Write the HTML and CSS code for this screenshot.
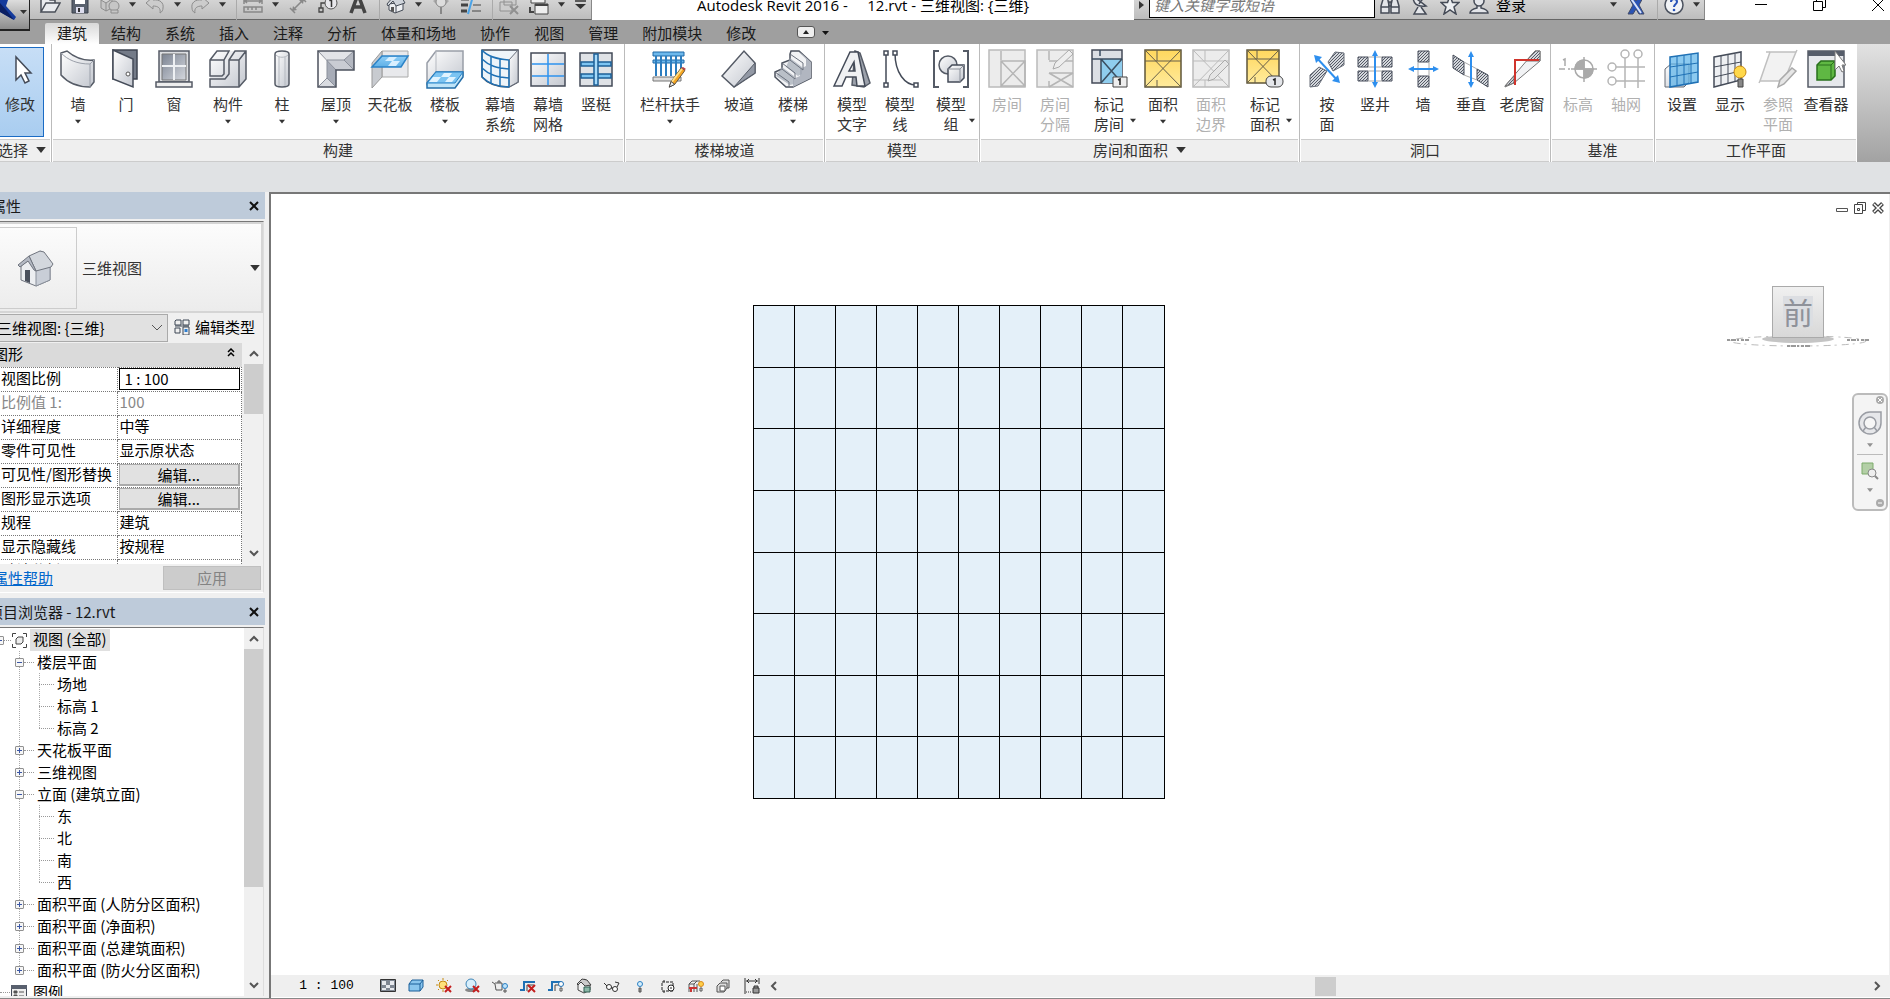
FILE: index.html
```html
<!DOCTYPE html>
<html lang="zh-CN">
<head>
    <meta charset="UTF-8">
    <meta name="viewport" content="width=device-width, initial-scale=1.0">
    <title>Autodesk Revit 2016 - 12.rvt</title>
    <link rel="stylesheet" href="styles.css">
</head>
<body>
    <!-- shared gradients and small symbols -->
    <svg class="defs" width="0" height="0" aria-hidden="true">
        <defs>
            <linearGradient id="gr" x1="0" y1="0" x2="1" y2="1"><stop offset="0" stop-color="#fff"/><stop offset="1" stop-color="#c3c7cf"/></linearGradient>
            <linearGradient id="gd" x1="0" y1="0" x2="1" y2="1"><stop offset="0" stop-color="#7b8392"/><stop offset="1" stop-color="#d5d8de"/></linearGradient>
            <linearGradient id="bl" x1="0" y1="0" x2="0" y2="1"><stop offset="0" stop-color="#8ccdf8"/><stop offset="1" stop-color="#5fb0e6"/></linearGradient>
            <linearGradient id="ye" x1="0" y1="0" x2="0" y2="1"><stop offset="0" stop-color="#ffd75e"/><stop offset="1" stop-color="#ffeb9c"/></linearGradient>
            <pattern id="hatch" width="3" height="3" patternUnits="userSpaceOnUse"><rect width="3" height="3" fill="#d4d7dc"/><path d="M0 3 3 0" stroke="#555b66"/></pattern>
            <symbol id="tri" viewBox="0 0 8 5"><path d="M0 0h8L4 5z" fill="#333"/></symbol>
            <symbol id="pencil" viewBox="0 0 20 24"><path d="M1 23 3 17 14 2l4 3L7 20z" fill="#f5a623" stroke="#5b4a35"/><path d="m4 17 11-14" stroke="#ffe08a" stroke-width="2"/><path d="m1 23 2-6 4 3z" fill="#eee" stroke="#444"/><path d="m14 2 2-1 3 2-1 2z" fill="#b44" /></symbol>
        </defs>
    </svg>

    <header class="titlebar">
        <div class="quick-access">
            <button class="qa" aria-label="打开"><svg width="22" height="18" viewBox="0 0 22 18"><path d="M2 16V2h7l2 2h5v3M2 16l5-9h14l-5 9z" fill="#e9ebee" stroke="#4a4f58" stroke-width="1.5"/></svg></button>
            <button class="qa" aria-label="保存"><svg width="18" height="18" viewBox="0 0 18 18"><path d="M1 1h16v16H1z" fill="#59616e" stroke="#3a404a"/><path d="M4 1h10v7H4z" fill="#fff"/><path d="M5 11h8v6H5z" fill="#dde"/><path d="M7 12h2v4H7z" fill="#333"/></svg></button>
            <button class="qa" aria-label="同步"><svg width="22" height="18" viewBox="0 0 22 18" fill="#c6c6c6" stroke="#8d8d8d"><path d="m2 4 5-3 6 2v9l-6 3-5-3zM7 7v8M2 4l5 3 6-4"/><circle cx="15" cy="10" r="5"/><path d="M12 14h7v3h-7z"/></svg></button>
            <button class="qa-arrow" aria-label="同步选项"><svg width="7" height="5"><use href="#tri"/></svg></button>
            <button class="qa" aria-label="撤销"><svg width="20" height="18" viewBox="0 0 20 18"><path d="M1 7 8 1v3c7-1 11 3 10 8 0 2-1 4-3 5 1-5-2-7-7-7v3z" fill="#ccc" stroke="#8d8d8d"/></svg></button>
            <button class="qa-arrow" aria-label="撤销列表"><svg width="7" height="5"><use href="#tri"/></svg></button>
            <button class="qa" aria-label="恢复"><svg width="20" height="18" viewBox="0 0 20 18"><path d="m19 7-7-6v3C5 3 1 7 2 12c0 2 1 4 3 5-1-5 2-7 7-7v3z" fill="#ccc" stroke="#8d8d8d"/></svg></button>
            <button class="qa-arrow" aria-label="恢复列表"><svg width="7" height="5"><use href="#tri"/></svg></button>
            <span class="qa-sep"></span>
            <button class="qa" aria-label="测量"><svg width="20" height="16" viewBox="0 0 20 16" fill="none" stroke="#888" stroke-width="1.5"><path d="M1 4h18M1 1v6M19 1v6M4 2 2 4l2 2M16 2l2 2-2 2M1 10h18v5H1zM5 10v3M9 10v3M13 10v3"/></svg></button>
            <button class="qa-arrow" aria-label="测量选项"><svg width="7" height="5"><use href="#tri"/></svg></button>
            <button class="qa" aria-label="对齐尺寸标注"><svg width="18" height="18" viewBox="0 0 18 18" stroke="#888" stroke-width="1.5"><path d="m3 15 12-12M1 12l5 5M12 1l5 5"/><path d="m3 15 1-5 4 4zM15 3l-5 1 4 4z" fill="#888" stroke="none"/></svg></button>
            <button class="qa" aria-label="按类别标记"><svg width="20" height="20" viewBox="0 0 20 20"><path d="M1 17h4v-4H1zM3 13V8h4" fill="none" stroke="#444" stroke-width="1.3"/><circle cx="13" cy="8" r="6" fill="#e8e8ec" stroke="#555"/><path d="m11.500 6 2-1.500V12" fill="none" stroke="#333" stroke-width="1.500"/></svg></button>
            <button class="qa" aria-label="文字"><svg width="20" height="18" viewBox="0 0 20 18"><path d="M3 17 9 1h2l6 16M5 11h10" fill="none" stroke="#444" stroke-width="3.500"/></svg></button>
            <span class="qa-sep"></span>
            <button class="qa" aria-label="默认三维视图"><svg width="20" height="18" viewBox="0 0 20 18"><path d="M3 8v6l6 3 8-3V6z" fill="#eef0f3" stroke="#444b56"/><path d="m1 8 6-7 8-1 4 7-9 3-3-5-5 5z" fill="#cfd4db" stroke="#444b56"/><path d="M10 10v7" stroke="#444b56"/><path d="M5 11h3v5l-3-1z" fill="#555"/></svg></button>
            <button class="qa-arrow" aria-label="三维视图选项"><svg width="7" height="5"><use href="#tri"/></svg></button>
            <button class="qa" aria-label="剖面"><svg width="18" height="20" viewBox="0 0 18 20"><path d="M1 6 9 0l8 6-5 5H6z" fill="#aaa"/><circle cx="9" cy="7" r="5" fill="#ddd" stroke="#888"/><path d="M9 12v7" stroke="#888" stroke-width="2"/></svg></button>
            <button class="qa" aria-label="细线"><svg width="20" height="20" viewBox="0 0 20 20"><path d="M0 4h8M0 10h7M0 16h6" stroke="#444" stroke-width="3"/><path d="M13 4h7M12 10h8M11 16h9" stroke="#444"/><path d="M12 1 7 19" stroke="#4aa3e8" stroke-width="2"/></svg></button>
            <span class="qa-sep"></span>
            <button class="qa" aria-label="关闭隐藏窗口"><svg width="20" height="20" viewBox="0 0 20 20" fill="#ccc" stroke="#909090"><path d="M5 2h12v8H5zM1 7h12v9H1z"/><path d="m11 11 8 8M19 11l-8 8" stroke-width="2"/></svg></button>
            <button class="qa" aria-label="切换窗口"><svg width="20" height="20" viewBox="0 0 20 20" fill="#eee" stroke="#444"><path d="M2 1h14v7H2zM6 9h13v10H6z"/><path d="M6 10h13M1 12v5h4" stroke-width="2" fill="none"/></svg></button>
            <button class="qa-arrow" aria-label="窗口列表"><svg width="7" height="5"><use href="#tri"/></svg></button>
            <button class="qa-arrow" aria-label="自定义快速访问工具栏"><svg width="11" height="10" viewBox="0 0 11 10"><path d="M0 1h11" stroke="#333" stroke-width="1.500"/><path d="M0 4h11L5.500 9z" fill="#333"/></svg></button>
        </div>
        <div class="window-title">Autodesk Revit 2016 -&nbsp;&nbsp;&nbsp;&nbsp; 12.rvt - 三维视图: {三维}</div>
        <div class="info-center">
            <button class="search-toggle" aria-label="展开搜索"><svg width="5" height="8"><path d="M0 0v8l5-4z" fill="#333"/></svg></button>
            <input class="search" type="text" placeholder="键入关键字或短语" aria-label="搜索">
            <button class="qa" aria-label="查找"><svg width="20" height="20" viewBox="0 0 20 20" fill="#e3e5e9" stroke="#454b57" stroke-width="1.500"><path d="M4 1h3l2 9v8H1v-7zM16 1h-3l-2 9v8h8v-7z"/><path d="M9 7h2v4H9zM1 12h8M11 12h8"/></svg></button>
            <button class="qa" aria-label="通讯中心"><svg width="20" height="20" viewBox="0 0 20 20" fill="#e3e5e9" stroke="#454b57" stroke-width="1.500"><path d="M3 1c0 8 4 11 13 10zM9 9l5-7M8 12l-4 7h12l-5-7"/><circle cx="14" cy="2" r="1.500"/></svg></button>
            <button class="qa" aria-label="收藏夹"><svg width="20" height="20" viewBox="0 0 20 20"><path d="m10 1 2.500 6.500H19L14 12l2 7-6-4-6 4 2-7-5-4.500h6.500z" fill="#eceef1" stroke="#454b57" stroke-width="1.500"/></svg></button>
            <button class="sign-in"><svg width="20" height="20" viewBox="0 0 20 20" fill="#e3e5e9" stroke="#454b57" stroke-width="1.500"><path d="M1 18c0-3 3-4 7-5V9h4v4c4 1 7 2 7 5z"/><circle cx="10" cy="6" r="5"/></svg><span>登录</span></button>
            <button class="qa-arrow" aria-label="登录选项"><svg width="7" height="5"><use href="#tri"/></svg></button>
            <button class="qa" aria-label="Exchange Apps"><svg width="20" height="20" viewBox="0 0 20 20"><path d="M2 1h5l3 5 3-5h5l-5 9 5 9h-5l-3-5-3 5H2l5-9z" fill="#2a53b5" stroke="#444c66"/><path d="m4 2 11 16" stroke="#d9e3fa" stroke-width="2"/></svg></button>
            <span class="qa-sep"></span>
            <button class="qa" aria-label="帮助"><svg width="20" height="20" viewBox="0 0 20 20"><circle cx="10" cy="10" r="9" fill="#f1f3f6" stroke="#4b525f" stroke-width="1.500"/><path d="M7 7c0-4 6-4 6 0 0 2-3 2-3 5" fill="none" stroke="#2752b8" stroke-width="2"/><circle cx="10" cy="15" r="1.300" fill="#2752b8"/></svg></button>
            <button class="qa-arrow" aria-label="帮助选项"><svg width="7" height="5"><use href="#tri"/></svg></button>
        </div>
        <div class="window-buttons">
            <button aria-label="最小化"><svg width="12" height="12"><path d="M0 5.500h12" stroke="#000"/></svg></button>
            <button aria-label="还原"><svg width="14" height="14" fill="none" stroke="#000"><path d="M.5 3.500h9v9h-9zM3.500 3V.5h9v9H10"/></svg></button>
            <button aria-label="关闭"><svg width="12" height="12"><path d="m0 0 12 12M12 0 0 12" stroke="#000"/></svg></button>
        </div>
    </header>
    <button class="app-button" aria-label="应用程序菜单"><svg width="28" height="30" viewBox="0 0 28 30"><path d="M0 0h8l-2 6 10 11-2 3-10-6-4-2z" fill="#143a9c"/><path d="m0 3 7 8 7 9-9-5-5-3z" fill="#0b1f63"/><path d="M20 10h7l-3.500 4z" fill="#333"/></svg></button>

    <nav class="tabs">
        <button class="tab active">建筑</button>
        <button class="tab">结构</button>
        <button class="tab">系统</button>
        <button class="tab">插入</button>
        <button class="tab">注释</button>
        <button class="tab">分析</button>
        <button class="tab">体量和场地</button>
        <button class="tab">协作</button>
        <button class="tab">视图</button>
        <button class="tab">管理</button>
        <button class="tab">附加模块</button>
        <button class="tab">修改</button>
        <button class="tab-state" aria-label="最小化功能区"><svg width="34" height="12" viewBox="0 0 34 12"><rect x=".5" y=".5" width="17" height="11" rx="2.500" fill="#eee" stroke="#555"/><path d="m6 8 3-4 3 4z" fill="#222"/><path d="M25 5h7l-3.500 4z" fill="#111"/></svg></button>
    </nav>

    <main class="ribbon">
        <section class="panel select-panel">
            <div class="tools">
                <button class="tool modify"><svg width="40" height="40" viewBox="0 0 40 40"><path d="M16 8v23l5-5 4 8 4-2-4-8h6z" fill="#fff" stroke="#444b58" stroke-width="1.500"/></svg><span>修改</span></button>
            </div>
            <h2>选择 <svg width="10" height="6"><use href="#tri"/></svg></h2>
        </section>

        <section class="panel build-panel">
            <div class="tools">
                <button class="tool"><svg width="40" height="40" viewBox="0 0 40 40"><path d="M3 4 9 2c7 6 16 10 27 9v22l-4 5C20 38 10 34 3 26z" fill="url(#gr)" stroke="#555b66" stroke-width="1.500"/><path d="M3 4c7 7 16 11 29 11v23M32 15l4-4" fill="none" stroke="#9ba0aa"/></svg><span>墙</span><svg class="drop" width="6" height="5"><use href="#tri"/></svg></button>
                <button class="tool"><svg width="40" height="40" viewBox="0 0 40 40"><path d="M7 1h24v29H7z" fill="#747b88" stroke="#3e4450" stroke-width="1.500"/><path d="m7 1 20 9v28L7 30z" fill="url(#gr)" stroke="#444b58" stroke-width="1.500"/><circle cx="22" cy="25" r="2" fill="#fff" stroke="#555"/></svg><span>门</span></button>
                <button class="tool"><svg width="40" height="40" viewBox="0 0 40 40"><path d="M5 2h30v31H5z" fill="#dcdee2" stroke="#555b66" stroke-width="1.500"/><path d="M8 5h24v26H8z" fill="url(#gd)" stroke="#777"/><path d="M20 5v26M8 17h24" stroke="#eef0f3" stroke-width="2"/><path d="M2 33h36v5H2z" fill="#eee" stroke="#555b66" stroke-width="1.500"/></svg><span>窗</span></button>
                <button class="tool wide"><svg width="40" height="40" viewBox="0 0 40 40"><path d="m2 11 7-9h29v28l-7 8H2V28z" fill="url(#gr)"/><path d="M2 11 9 2h12l-5 9v14l-2 2H2zM2 11h14M16 11l5-9M2 30h15l4-5V11l6-9h11v28l-7 8H2zM21 11h10v27M31 11l7-9" fill="none" stroke="#555b66" stroke-width="1.500"/></svg><span>构件</span><svg class="drop" width="6" height="5"><use href="#tri"/></svg></button>
                <button class="tool"><svg width="40" height="40" viewBox="0 0 40 40"><path d="M13 5c0-4 14-4 14 0v30c0 4-14 4-14 0z" fill="url(#gr)" stroke="#555b66" stroke-width="1.500"/><path d="M14 6c3 3 9 3 12 0M17 8v29M23 8v29" fill="none" stroke="#b5b9c0"/></svg><span>柱</span><svg class="drop" width="6" height="5"><use href="#tri"/></svg></button>
                <button class="tool wide"><svg width="40" height="40" viewBox="0 0 40 40"><path d="M2 2h36L28 11H11z" fill="#e2e4e8"/><path d="m2 2 9 9v18l-9 9z" fill="#fafafa"/><path d="m38 2-10 9 10 10z" fill="#b4b8c1"/><path d="M11 11h17l10 10H20z" fill="#c9ccd3"/><path d="m11 11 9 10v17l-9-9z" fill="#a7acb7"/><path d="m2 38 9-9 9 9z" fill="#d9dbe0"/><path d="m2 2 18 19M11 11v18M11 11h17l10-9M28 11l10 10M11 29l-9 9M11 29l9 9" fill="none" stroke="#8b909b"/><path d="M2 2h36v19H20v17H2z" fill="none" stroke="#4c525e" stroke-width="1.500"/></svg><span>屋顶</span><svg class="drop" width="6" height="5"><use href="#tri"/></svg></button>
                <button class="tool"><svg width="40" height="40" viewBox="0 0 40 40"><path d="M12 2h26v26H12z" fill="#e8e9ec" stroke="#aaa"/><path d="M2 14 12 2v26L2 39z" fill="#c8cbd0" stroke="#999"/><path d="m2 18 10-11h26l-7 11z" fill="url(#bl)" stroke="#2b83c7" stroke-width="1.500"/><path d="m19 8-4 4h8l4-4zM34 8l-4 4h-8l-4 5h8l4-5z" fill="#d8efff"/></svg><span>天花板</span></button>
                <button class="tool floor"><svg width="40" height="40" viewBox="0 0 40 40"><path d="m2 14 9-12h27v24H11L2 35z" fill="url(#gr)" stroke="#999ea8" stroke-width="1.500"/><path d="M11 2v22" stroke="#b5b9c0"/><path d="m2 34 9-11h27v5l-8 11H2z" fill="#bfe4f8" stroke="#256fa9" stroke-width="1.500"/><path d="m2 34 9-11h27l-8 11z" fill="#7cc4f2" stroke="#2b83c7"/><path d="m19 24-3 4h8l3-4zM34 24l-3 4h-7l-4 5h7l4-5zM16 28H8l-4 5h8z" fill="#e0f3ff"/></svg><span>楼板</span><svg class="drop" width="6" height="5"><use href="#tri"/></svg></button>
                <button class="tool"><svg width="40" height="40" viewBox="0 0 40 40"><path d="M2 1h36v32l-9 5C17 38 7 34 2 28z" fill="#eef4f9" stroke="#444b58" stroke-width="1.500"/><path d="m38 1-9 10v27l9-5z" fill="url(#gr)" stroke="#6a707c"/><path d="M2 1c6 7 15 9 27 10M2 10c7 7 15 9 27 10M2 19c7 7 15 9 27 10M2 28c7 7 15 10 27 10M2 1v27M11 8v27M20 10v27M29 11v27" fill="none" stroke="#1f71b5" stroke-width="1.500"/></svg><span>幕墙<br>系统</span></button>
                <button class="tool"><svg width="40" height="40" viewBox="0 0 40 40"><path d="M3 4h34v33H3z" fill="url(#gr)" stroke="#444b58" stroke-width="1.500"/><path d="M20 5v31M4 15h32M4 27h32" stroke="#2e93ee" stroke-width="1.500"/></svg><span>幕墙<br>网格</span></button>
                <button class="tool"><svg width="40" height="40" viewBox="0 0 40 40"><path d="M4 4h32v33H4z" fill="#dfe2e6" stroke="#444b58" stroke-width="1.500"/><path d="M5 13h30v4H5zM5 25h30v4H5z" fill="#7cc4f2" stroke="#1c5f96" stroke-width="1.500"/><path d="M18 5h4v31h-4z" fill="#a7dbfa" stroke="#1c5f96" stroke-width="1.500"/></svg><span>竖梃</span></button>
            </div>
            <h2>构建</h2>
        </section>

        <section class="panel stair-panel">
            <div class="tools">
                <button class="tool rail"><svg width="40" height="40" viewBox="0 0 40 40"><path d="M3 3h31v4H3zM3 11h31v3H3z" fill="#6db8ec" stroke="#1f69a6"/><path d="M3 28h28v4H3z" fill="#ddd" stroke="#777"/><path d="M6 7v20M11 7v20M16 7v20M21 7v20M26 7v20M31 7v18" stroke="#2c7dbf" stroke-width="2"/><svg x="18" y="17" width="19" height="22"><use href="#pencil"/></svg></svg><span>栏杆扶手</span><svg class="drop" width="6" height="5"><use href="#tri"/></svg></button>
                <button class="tool mid"><svg width="40" height="40" viewBox="0 0 40 40"><path d="M3 27 25 2l-3 13-7 23z" fill="#f4f5f7"/><path d="M3 27 25 2l11 12v10L15 38z" fill="url(#gr)" stroke="#555b66" stroke-width="1.500"/><path d="M36 14v10L15 38z" fill="#9399a5" stroke="#555b66"/></svg><span>坡道</span></button>
                <button class="tool mid"><svg width="40" height="40" viewBox="0 0 40 40"><path d="M18 2h8l12 11v16L20 38h-7L2 28v-5l7-3v-6l8-3V5z" fill="#f2f3f5" stroke="#4c525e" stroke-width="1.500"/><path d="m26 2 12 11v16l-18 9v-8l7-3v-7l6-3v-7z" fill="#b1b6c0"/><path d="m17 9 12 9v7l-4 2-12-9zM9 18l12 9v8l-4 1-14-9z" fill="#a3a9b5" opacity=".7"/><path d="m17 5 13 9v7l-13-10M9 14l13 10v6L9 20M2 23l14 10v5" fill="none" stroke="#6c727e"/></svg><span>楼梯</span><svg class="drop" width="6" height="5"><use href="#tri"/></svg></button>
            </div>
            <h2>楼梯坡道</h2>
        </section>

        <section class="panel model-panel">
            <div class="tools">
                <button class="tool"><svg width="40" height="40" viewBox="0 0 40 40"><path d="m23 2 5 2 10 30-6 4-12-2z" fill="#9ca1ab" stroke="#555b66" stroke-width="1.500"/><path d="M2 37 18 3h8l7 34h-8l-1-9H14l-4 9zM17 22h6l-1-9z" fill="#f0f1f3" fill-rule="evenodd" stroke="#444b58" stroke-width="1.500"/></svg><span>模型<br>文字</span></button>
                <button class="tool"><svg width="40" height="40" viewBox="0 0 40 40" fill="#fff" stroke="#444b58" stroke-width="1.500"><path d="M6 4v32M15 4c0 20 10 32 21 32" fill="none"/><path d="M4 2h4v4H4zM4 34h4v4H4zM13 2h4v4h-4zM34 34h4v4h-4z"/></svg><span>模型<br>线</span></button>
                <button class="tool mid side-drop"><svg width="40" height="40" viewBox="0 0 40 40"><path d="M8 2H3v36h5M32 2h5v36h-5" fill="none" stroke="#555b66" stroke-width="2"/><circle cx="17" cy="16" r="9" fill="url(#gr)" stroke="#555b66" stroke-width="1.500"/><path d="m17 20 4-4h12v13l-4 4H17z" fill="url(#gr)" stroke="#444b58" stroke-width="1.500"/><path d="M17 20h12v13M29 20l4-4" fill="none" stroke="#8b909a"/></svg><span>模型<br>组</span><svg class="drop" width="6" height="5"><use href="#tri"/></svg></button>
            </div>
            <h2>模型</h2>
        </section>

        <section class="panel room-panel">
            <div class="tools">
                <button class="tool" disabled><svg width="40" height="40" viewBox="0 0 40 40"><path d="M2 1h36v37H2z" fill="#ececec" stroke="#bbb" stroke-width="1.500"/><path d="M14 2v9M14 32v6M14 12h24v25H14zM14 12l24 25M38 12 14 37" fill="none" stroke="#b5b5b5" stroke-width="1.500"/></svg><span>房间</span></button>
                <button class="tool" disabled><svg width="40" height="40" viewBox="0 0 40 40"><path d="M2 1h36v37H2z" fill="#ececec" stroke="#bbb" stroke-width="1.500"/><path d="M14 2v9M14 32v6M14 24h24M14 24l24 14M38 24 14 38M14 12h24" fill="none" stroke="#b5b5b5" stroke-width="1.500"/><path d="m18 20 2-6L34 1l4 4-14 13z" fill="#eee" stroke="#aaa"/></svg><span>房间<br>分隔</span></button>
                <button class="tool wide side-drop"><svg width="40" height="40" viewBox="0 0 40 40"><path d="M3 1h30v33H3z" fill="#dcdfe4" stroke="#444b58" stroke-width="1.500"/><path d="M12 10h21v24H12z" fill="#8fcdee"/><path d="M11 1v6M3 10h30M12 10v24M12 10l21 24M33 10 12 34" fill="none" stroke="#3b4e60" stroke-width="1.500"/><path d="M24 28h14v10H24z" fill="#eee" stroke="#444"/><path d="m29 31 2-1v6" fill="none" stroke="#222" stroke-width="1.500"/></svg><span>标记<br>房间</span><svg class="drop" width="6" height="5"><use href="#tri"/></svg></button>
                <button class="tool"><svg width="40" height="40" viewBox="0 0 40 40"><path d="M2 1h36v37H2z" fill="url(#ye)" stroke="#5f553a" stroke-width="1.500"/><path d="m2 1 36 37M38 1 2 38M2 12h36M14 1v11M14 31v7" fill="none" stroke="#675f4a"/></svg><span>面积</span><svg class="drop" width="6" height="5"><use href="#tri"/></svg></button>
                <button class="tool" disabled><svg width="40" height="40" viewBox="0 0 40 40"><path d="M2 1h36v37H2z" fill="#ececec" stroke="#bbb" stroke-width="1.500"/><path d="m2 1 36 37M38 1 2 38M2 12h36M14 1v11M14 31v7M2 31h30" fill="none" stroke="#bbb"/><path d="m17 32 2-6 15-15 4 4-15 15z" fill="#e6e6e6" stroke="#aaa"/></svg><span>面积<br>边界</span></button>
                <button class="tool wide side-drop"><svg width="40" height="40" viewBox="0 0 40 40"><path d="M2 1h32v33H2z" fill="url(#ye)" stroke="#5f553a" stroke-width="1.500"/><path d="m2 1 32 33M34 1 2 34M2 10h32M12 1v9M10 28v6" fill="none" stroke="#675f4a"/><rect x="21" y="27" width="17" height="11" rx="5" fill="#e4e6ea" stroke="#444"/><path d="m28 31 2-1v6" fill="none" stroke="#222" stroke-width="1.500"/></svg><span>标记<br>面积</span><svg class="drop" width="6" height="5"><use href="#tri"/></svg></button>
            </div>
            <h2>房间和面积 <svg width="10" height="6"><use href="#tri"/></svg></h2>
        </section>

        <section class="panel opening-panel">
            <div class="tools">
                <button class="tool"><svg width="40" height="40" viewBox="0 0 40 40"><path d="m21 13 7-10 9 1v12L26 22zM3 38V26l9-8 8 4-9 15z" fill="url(#hatch)" stroke="#666c77"/><path d="m9 8 22 24" stroke="#2e8fee" stroke-width="2"/><path d="m7 6 8 2-6 6zM33 34l-8-2 6-6z" fill="#2e8fee"/></svg><span>按<br>面</span></button>
                <button class="tool"><svg width="40" height="40" viewBox="0 0 40 40"><path d="M3 8h10v10H3zM27 8h10v10H27zM3 22h10v10H3zM27 22h10v10H27z" fill="url(#hatch)" stroke="#444b58"/><path d="M13 8h14M13 18h14M13 22h14M13 32h14" stroke="#aaa"/><path d="M20 4v33" stroke="#2e8fee" stroke-width="2"/><path d="m20 1 3 6h-6zM20 39l3-6h-6z" fill="#2e8fee"/></svg><span>竖井</span></button>
                <button class="tool"><svg width="40" height="40" viewBox="0 0 40 40"><path d="M15 2h11v11H15zM15 27h11v11H15z" fill="url(#hatch)" stroke="#444b58"/><path d="M15 13v14M26 13v14" stroke="#aaa"/><path d="M8 20h25" stroke="#2e8fee" stroke-width="2"/><path d="m5 20 6-3v6zM36 20l-6-3v6z" fill="#2e8fee"/></svg><span>墙</span></button>
                <button class="tool"><svg width="40" height="40" viewBox="0 0 40 40"><path d="m2 6 11 7v13L2 19zM26 20l11 6v12l-11-7z" fill="url(#hatch)" stroke="#444b58"/><path d="m13 13 13 7M13 26l13 5" stroke="#aaa"/><path d="M20 6v30" stroke="#2e8fee" stroke-width="2"/><path d="m20 2 3 6h-6zM20 39l3-6h-6z" fill="#2e8fee"/></svg><span>垂直</span></button>
                <button class="tool mid"><svg width="40" height="40" viewBox="0 0 40 40"><path d="M3 37 33 2h5v10L12 34l-9 4z" fill="#f2f3f5" stroke="#777"/><path d="M24 12 33 2h5v10zM3 37l9-10v7z" fill="url(#hatch)" stroke="#777"/><path d="M13 36V11h24" fill="none" stroke="#d0342c" stroke-width="2"/></svg><span>老虎窗</span></button>
            </div>
            <h2>洞口</h2>
        </section>

        <section class="panel datum-panel">
            <div class="tools">
                <button class="tool" disabled><svg width="40" height="40" viewBox="0 0 40 40" fill="none" stroke="#aaa" stroke-width="1.500"><path d="M1 20h6M10 20h2M5 11l2-1v7"/><circle cx="26" cy="20" r="9"/><path d="M26 8v25M13 20h26"/><path d="M26 20v-9a9 9 0 0 0-9 9zM26 20v9a9 9 0 0 0 9-9z" fill="#aaa"/></svg><span>标高</span></button>
                <button class="tool" disabled><svg width="40" height="40" viewBox="0 0 40 40" fill="none" stroke="#b5b5b5" stroke-width="1.500"><circle cx="19" cy="5" r="4"/><circle cx="32" cy="5" r="4"/><circle cx="6" cy="18" r="4"/><circle cx="6" cy="32" r="4"/><path d="M19 9v30M32 9v30M10 18h29M10 32h29"/></svg><span>轴网</span></button>
            </div>
            <h2>基准</h2>
        </section>

        <section class="panel plane-panel">
            <div class="tools">
                <button class="tool"><svg width="40" height="40" viewBox="0 0 40 40"><path d="m3 20 6-5h18v18l-5 5H3z" fill="url(#gr)" stroke="#666c77"/><path d="m8 8 28-4v29L8 38z" fill="#5bb4ea" fill-opacity=".7" stroke="#1f71b5" stroke-width="1.500"/><path d="M15 7v30M22 6v30M29 5v29M8 18l28-4M8 28l28-5" stroke="#1f71b5"/></svg><span>设置</span></button>
                <button class="tool"><svg width="40" height="40" viewBox="0 0 40 40"><path d="m4 8 27-5v28L4 38z" fill="#eef0f3" stroke="#444b58" stroke-width="1.500"/><path d="M11 7v29M18 6v29M25 5v27M4 18l27-5M4 28l27-6" stroke="#444b58"/><circle cx="30" cy="23" r="6" fill="#ffd84a" stroke="#c98a12"/><path d="M28 30h5v8h-5z" fill="#888" stroke="#444"/></svg><span>显示</span></button>
                <button class="tool" disabled><svg width="40" height="40" viewBox="0 0 40 40" fill="#f2f2f2" stroke="#c0c0c0" stroke-width="1.500"><path d="M12 3h26L26 32H2z"/><path d="M8 3h4M38 3l1-2M2 32l-1 2"/><path d="m20 38 2-7 12-12 4 3-12 13z" fill="#e6e6e6" stroke="#aaa"/></svg><span>参照<br>平面</span></button>
                <button class="tool"><svg width="40" height="40" viewBox="0 0 40 40"><path d="M2 2h36v36H2z" fill="#e6e8ec" stroke="#555b66" stroke-width="1.500"/><path d="M2 2h36v5H2z" fill="#565d6a"/><path d="m11 16 4-4h14v15l-4 4H11z" fill="#5fb843" stroke="#28701c" stroke-width="1.500"/><path d="M11 16h14v15M25 16l4-4" fill="none" stroke="#28701c"/><path d="M29 2v19l4-4 3 6 2-1-2-6h4z" fill="#fff" stroke="#777"/></svg><span>查看器</span></button>
            </div>
            <h2>工作平面</h2>
        </section>
    </main>

    <div class="options-bar"></div>

    <div class="workspace">
        <aside class="side">
            <section class="properties">
                <div class="dock-title prop-title"><span>属性</span><button aria-label="关闭属性"><svg width="10" height="10"><path d="m1 1 8 8M9 1 1 9" stroke="#111" stroke-width="2"/></svg></button></div>
                <div class="dock-body">
                    <button class="type-selector">
                        <span class="preview"><svg width="38" height="38" viewBox="0 0 38 38"><path d="M4 17v14l15 6 14-6V14L24 2z" fill="#eceef1" stroke="#70757f"/><path d="M19 20v17l14-6V15z" fill="#c9ced7" stroke="#8a909b"/><path d="M8 21h5v13l-5-2z" fill="#4a505c"/><path d="m12 7 11-5 4 1 9 12-2 3-15 4z" fill="#d3d7dd" stroke="#70757f"/><path d="m1 16 11-9 7 15-2-1-6-9-8 6z" fill="#b4b9c3" stroke="#70757f"/></svg></span>
                        <span class="type-name">三维视图</span>
                        <svg width="10" height="6"><use href="#tri"/></svg>
                    </button>
                    <div class="instance-row">
                        <label class="instance">
                            <select aria-label="实例"><option>三维视图: {三维}</option></select>
                            <svg width="10" height="6"><path d="m0 0 5 5 5-5" fill="none" stroke="#555"/></svg>
                        </label>
                        <button class="edit-type"><svg width="16" height="16" viewBox="0 0 16 16" fill="none" stroke="#3c4654"><path d="M2 1h5v5H1V2zM9 1h6v5H9zM1 9h5v5H1zM1 7h14"/><path d="M9 8h6v8H9z" fill="#eee"/><path d="M10.500 10h3v3h-3z" fill="#2d7ed1" stroke="none"/></svg><span>编辑类型</span></button>
                    </div>
                    <div class="prop-scroll">
                        <table>
                            <colgroup><col class="name-col"><col></colgroup>
                            <thead><tr><th colspan="2">图形<svg width="8" height="9"><path d="m1 4 3-3 3 3M1 8l3-3 3 3" fill="none" stroke="#000" stroke-width="1.500"/></svg></th></tr></thead>
                            <tbody>
                                <tr><td><label for="scale">视图比例</label></td><td class="boxed"><input id="scale" type="text" value="1 : 100"></td></tr>
                                <tr class="dim"><td>比例值 1:</td><td>100</td></tr>
                                <tr><td>详细程度</td><td>中等</td></tr>
                                <tr><td>零件可见性</td><td>显示原状态</td></tr>
                                <tr><td>可见性/图形替换</td><td class="boxed"><button>编辑...</button></td></tr>
                                <tr><td>图形显示选项</td><td class="boxed"><button>编辑...</button></td></tr>
                                <tr><td>规程</td><td>建筑</td></tr>
                                <tr><td>显示隐藏线</td><td>按规程</td></tr>
                                <tr><td>默认分析显示</td><td>无</td></tr>
                            </tbody>
                        </table>
                        <div class="vscroll"><svg width="10" height="7"><path d="m1 6 4-4 4 4" fill="none" stroke="#555" stroke-width="2"/></svg><i class="short"></i><svg width="10" height="7"><path d="m1 1 4 4 4-4" fill="none" stroke="#555" stroke-width="2"/></svg></div>
                    </div>
                    <div class="prop-footer"><a href="#">属性帮助</a><button disabled>应用</button></div>
                </div>
            </section>

            <section class="browser">
                <div class="dock-title"><span>项目浏览器 - 12.rvt</span><button aria-label="关闭项目浏览器"><svg width="10" height="10"><path d="m1 1 8 8M9 1 1 9" stroke="#111" stroke-width="2"/></svg></button></div>
                <div class="tree-body">
                    <ul class="tree">
                        <li>
                            <div class="row root"><button class="toggle" aria-label="折叠"></button><i class="dots"></i><svg width="15" height="15" viewBox="0 0 15 15" fill="none" stroke="#444"><path d="M4 .5H.5V4M11 .5h3.500V4M4 14.500H.5V11M11 14.500h3.500V11"/><path d="m4 6 2-2h5v5l-2 2H4z" fill="#eee"/></svg><span class="selected">视图 (全部)</span></div>
                            <ul class="branches">
                                <li><div class="row"><button class="toggle" aria-label="折叠"></button><i class="dots"></i><span>楼层平面</span></div>
                                    <ul class="leaves"><li>场地</li><li>标高 1</li><li>标高 2</li></ul></li>
                                <li><div class="row"><button class="toggle plus" aria-label="展开"></button><i class="dots"></i><span>天花板平面</span></div></li>
                                <li><div class="row"><button class="toggle plus" aria-label="展开"></button><i class="dots"></i><span>三维视图</span></div></li>
                                <li><div class="row"><button class="toggle" aria-label="折叠"></button><i class="dots"></i><span>立面 (建筑立面)</span></div>
                                    <ul class="leaves"><li>东</li><li>北</li><li>南</li><li>西</li></ul></li>
                                <li><div class="row"><button class="toggle plus" aria-label="展开"></button><i class="dots"></i><span>面积平面 (人防分区面积)</span></div></li>
                                <li><div class="row"><button class="toggle plus" aria-label="展开"></button><i class="dots"></i><span>面积平面 (净面积)</span></div></li>
                                <li><div class="row"><button class="toggle plus" aria-label="展开"></button><i class="dots"></i><span>面积平面 (总建筑面积)</span></div></li>
                                <li><div class="row"><button class="toggle plus" aria-label="展开"></button><i class="dots"></i><span>面积平面 (防火分区面积)</span></div></li>
                            </ul>
                        </li>
                        <li><div class="row legend"><i class="dots"></i><svg width="16" height="15" viewBox="0 0 16 15"><path d="M.5.5h15v14H.5z" fill="#eee" stroke="#444b58"/><path d="M0 0h16v4H0z" fill="#59606e"/><path d="M3 6h3v2H3zM3 10h3v2H3zM8 7h5M8 11h5" fill="#555" stroke="#555"/></svg><span>图例</span></div></li>
                    </ul>
                    <div class="vscroll"><svg width="10" height="7"><path d="m1 6 4-4 4 4" fill="none" stroke="#555" stroke-width="2"/></svg><i class="long"></i><svg width="10" height="7"><path d="m1 1 4 4 4-4" fill="none" stroke="#555" stroke-width="2"/></svg></div>
                </div>
            </section>
        </aside>

        <section class="view">
            <div class="canvas">
                <svg class="curtain-wall" id="wall" width="413" height="495" shape-rendering="crispEdges"></svg>

                <div class="view-buttons">
                    <button aria-label="最小化视图"><svg width="12" height="12"><path d="M.5 6.500h11v3H.5z" fill="#fff" stroke="#555"/></svg></button>
                    <button aria-label="还原视图"><svg width="12" height="12" fill="#fff" stroke="#444"><path d="M3.500.5h8v8h-8z"/><path d="M.5 2.500h8v9h-8z"/><path d="M3.500 6.500h2v2h-2z"/></svg></button>
                    <button aria-label="关闭视图"><svg width="12" height="12"><path d="m1.500 1.500 9 9M10.500 1.500l-9 9" stroke="#444" stroke-width="4"/><path d="m2 2 8 8M10 2l-8 8" stroke="#fff" stroke-width="1.500"/></svg></button>
                </div>

                <div class="view-cube">
                    <svg class="compass" width="146" height="14" viewBox="0 0 146 14"><ellipse cx="73" cy="5" rx="36" ry="4" fill="#c4c4c4"/><ellipse cx="73" cy="7" rx="68" ry="5" fill="none" stroke="#bbb" stroke-dasharray="7 5 2 4"/><path d="M2 6h22M122 6h22M62 12h24" stroke="#999" stroke-width="2" stroke-dasharray="3 1 5 1 2 2"/></svg>
                    <button class="cube-face"><span>前</span></button>
                </div>

                <div class="nav-bar">
                    <button class="nav-small" aria-label="关闭导航栏"><svg width="8" height="8"><circle cx="4" cy="4" r="4" fill="#aaa"/><path d="m2 2 4 4M6 2 2 6" stroke="#fff"/></svg></button>
                    <button aria-label="导航控制盘"><svg width="24" height="24" viewBox="0 0 24 24" fill="#e6e7ea" stroke="#9a9da4" stroke-width="1.500"><path d="M12 1h11v11a11 11 0 1 1-11-11z"/><circle cx="12" cy="12" r="6" fill="#f6f6f6"/><path d="m8 16-3 4M16 16l3 4"/></svg></button>
                    <button aria-label="控制盘选项"><svg width="6" height="4" class="faint"><use href="#tri"/></svg></button>
                    <hr>
                    <button aria-label="区域放大"><svg width="18" height="18" viewBox="0 0 18 18"><path d="M1 1h11v11H1z" fill="#b3cfa6" stroke="#7cab6a"/><circle cx="11" cy="11" r="4" fill="#eee" stroke="#888"/><path d="m14 14 3 3" stroke="#888" stroke-width="2"/></svg></button>
                    <button aria-label="缩放选项"><svg width="6" height="4" class="faint"><use href="#tri"/></svg></button>
                    <button class="nav-small" aria-label="自定义导航栏"><svg width="8" height="8"><circle cx="4" cy="4" r="4" fill="#aaa"/><path d="M2 4h4" stroke="#fff"/></svg></button>
                </div>
            </div>

            <footer class="view-control">
                <button class="scale">1 : 100</button>
                <div class="view-tools">
                    <button aria-label="详细程度"><svg width="16" height="16"><path d="M.5 1.500h15v12H.5z" fill="#7f8792" stroke="#333"/><path d="M2 3h4v4H2zM10 3h4v4h-4zM6 7h4v3H6zM2 10h4v2H2zM10 10h4v2h-4z" fill="#e8eaee"/></svg></button>
                    <button aria-label="视觉样式"><svg width="16" height="16"><path d="m1 6 3-4h11v7l-3 4H1z" fill="#8ac6ee" stroke="#1b5f99"/><path d="M1 6h11v7M12 6l3-4" fill="none" stroke="#1b5f99"/></svg></button>
                    <button aria-label="日光路径"><svg width="16" height="16"><circle cx="7" cy="7" r="4" fill="#ffe27a" stroke="#c58a12"/><path d="M7 0v2M0 7h2M2 2l1 1M12 2l-1 1M2 12l1-1M7 12v2" stroke="#c58a12"/><path d="m9 8 6 6M15 8l-6 6" stroke="#c41e1e" stroke-width="2"/></svg></button>
                    <button aria-label="阴影"><svg width="16" height="16"><ellipse cx="7" cy="12" rx="6" ry="2" fill="#888"/><circle cx="7" cy="6" r="5" fill="#d8effc" stroke="#3c85b8"/><path d="m9 8 6 6M15 8l-6 6" stroke="#c41e1e" stroke-width="2"/></svg></button>
                    <button aria-label="渲染"><svg width="16" height="16" fill="#eee" stroke="#555"><path d="m0 4 3 2 1 6h6V5H3M5 4h4M7 2v2"/><circle cx="13" cy="8" r="2.500" fill="#bfe3fa" stroke="#2a80c4"/><path d="M12 12h2v2h-2z"/></svg></button>
                    <button aria-label="裁剪视图"><svg width="16" height="16" fill="none" stroke="#1f71b5" stroke-width="2"><path d="M0 12h4V4h11M4 12"/><path d="M7 13V7h7" stroke="#444" stroke-width="1"/><path d="m8 7 7 7M15 7l-7 7" stroke="#c41e1e"/></svg></button>
                    <button aria-label="显示裁剪区域"><svg width="16" height="16" fill="none" stroke="#1f71b5" stroke-width="2"><path d="M0 12h4V4h9"/><path d="M7 13V7h4" stroke="#444" stroke-width="1"/><circle cx="13" cy="6" r="2.500" fill="#fff" stroke-width="1"/><path d="M12 10h2v3h-2z" stroke="#555" stroke-width="1"/></svg></button>
                    <button aria-label="锁定三维视图"><svg width="16" height="16"><path d="M2 6v6l6 3 6-3V6L9 1z" fill="#f0f0f0" stroke="#444"/><path d="m1 6 5-5 5 1 4 5-6 1-4-4-3 3z" fill="#ccc" stroke="#444"/><path d="M8 9h6v5H8z" fill="#8bb8a8" stroke="#315f52"/></svg></button>
                    <button aria-label="临时隐藏"><svg width="16" height="16" fill="#fff" stroke="#333"><circle cx="5" cy="9" r="2.500"/><circle cx="11" cy="11" r="2.500"/><path d="M0 5l3 3M7 10h2M13 9l2-4-4-1" fill="none"/></svg></button>
                    <button aria-label="显示隐藏的图元"><svg width="16" height="16"><circle cx="8" cy="6" r="2.500" fill="#d6effd" stroke="#2a80c4"/><path d="M7 10h2v4H7z" fill="#999" stroke="#555"/></svg></button>
                    <button aria-label="工作共享显示"><svg width="16" height="16" fill="none" stroke="#222"><path d="M2 4h11v9H2z" stroke-dasharray="3 1"/><circle cx="11" cy="10" r="3" fill="#fff"/><path d="M10 10h2M4 4V2M4 13v2"/></svg></button>
                    <button aria-label="临时视图属性"><svg width="16" height="16" fill="none" stroke="#555"><path d="m1 6 3-3h8M1 6v8M6 6v8M1 6h5l3-3M9 6v8"/><path d="M1 10h8M3 10v4" stroke="#c33" stroke-width="2"/><circle cx="13" cy="6" r="2.500" fill="#ffcf4a" stroke="#d98b1a"/><path d="M12 10h2v3h-2z"/></svg></button>
                    <button aria-label="分析模型"><svg width="16" height="16" fill="#ddd" stroke="#555"><path d="m5 4 2-2h6v8h-2"/><path d="m1 8 3-3h7v5l-3 4H1z"/><path d="M4 8h5v5H4z" fill="#fff"/></svg></button>
                    <button aria-label="高亮位移集"><svg width="16" height="16" fill="none" stroke="#333"><path d="M1 0v16M15 0v6M2 3h12M5 1 3 3l2 2M11 1l2 2-2 2"/><path d="M2 14h5" stroke-dasharray="1 1"/><path d="M9 10h6v5H9zM10 10V8h4v2" fill="#999"/></svg></button>
                </div>
                <div class="hscroll"><svg width="7" height="10"><path d="M6 1 2 5l4 4" fill="none" stroke="#555" stroke-width="2"/></svg><i></i><svg width="7" height="10"><path d="m1 1 4 4-4 4" fill="none" stroke="#555" stroke-width="2"/></svg></div>
            </footer>
        </section>
    </div>

    <script>
        // curtain wall, front elevation: 10 x 8 panels
        const cols = 10, rows = 8, w = 411, h = 493;
        let shapes = '<rect x="0" y="0" width="' + w + '" height="' + h + '" fill="#e4f0f9"/>';
        for (let i = 0; i <= cols; i++) {
            const x = Math.floor(i * w / cols);
            shapes += '<rect x="' + x + '" y="0" width="1" height="' + (h + 1) + '"/>';
        }
        for (let j = 0; j <= rows; j++) {
            const y = Math.round(j * h / rows);
            shapes += '<rect x="0" y="' + y + '" width="' + (w + 1) + '" height="1"/>';
        }
        document.getElementById("wall").innerHTML = shapes;
    </script>
</body>
</html>
```
FILE: styles.css
```css
* {
    box-sizing: border-box;
}
body {
    margin: 0;
    height: 100vh;
    overflow: hidden;
    display: flex;
    flex-direction: column;
    background: #f0f0f0;
    color: #000;
    font-family: "Noto Sans CJK SC", sans-serif;
    font-size: 15px;
    line-height: 20px;
}
button, input, select {
    font: inherit;
    color: inherit;
    margin: 0;
    padding: 0;
    border: 0;
    background: none;
}
svg {
    display: block;
    flex: none;
}
.defs {
    position: absolute;
}

/* title bar */
.titlebar {
    display: flex;
    flex: none;
    height: 20px;
    background: #fff;
}
.quick-access, .info-center {
    display: flex;
    flex: none;
    align-items: center;
    padding-bottom: 10px;
    background: linear-gradient(#d4d4d4, #bdbdbd);
    border-bottom: 1px solid #666;
}
.quick-access {
    padding-left: 35px;
    width: 592px;
    border-right: 1px solid #888;
}
.qa, .qa-arrow {
    display: flex;
    flex: none;
    width: 30px;
    justify-content: center;
}
.qa-arrow {
    width: 15px;
}
.quick-access .qa-arrow:last-child {
    width: 23px;
}
.qa-sep {
    flex: none;
    width: 8px;
    height: 30px;
    background: linear-gradient(#aaa, #aaa) 6px 0 / 1px 100% no-repeat;
}
.window-title {
    flex: 1;
    height: 20px;
    font-family: "Open Sans", "Noto Sans CJK SC", sans-serif;
    line-height: 11px;
    text-align: center;
    white-space: nowrap;
}
.info-center {
    width: 571px;
    border-right: 1px solid #888;
}
.search-toggle {
    display: flex;
    flex: none;
    width: 15px;
    justify-content: center;
}
.search {
    width: 226px;
    height: 28px;
    flex: none;
    align-self: flex-end;
    margin-bottom: -9px;
    padding: 0 4px;
    border: 1px solid #000;
    background: #fff;
    font-style: italic;
}
.search::placeholder {
    color: #777;
    opacity: 1;
}
.sign-in {
    display: flex;
    flex: 1;
    align-items: center;
    gap: 7px;
    padding-left: 4px;
}
.window-buttons {
    display: flex;
    flex: none;
    justify-content: space-between;
    width: 185px;
    padding-left: 44px;
}
.window-buttons button {
    display: flex;
    width: 24px;
    height: 10px;
    align-items: center;
    justify-content: center;
}
.app-button {
    position: absolute;
    left: 0;
    top: 0;
    width: 30px;
    height: 31px;
    border: solid #222;
    border-width: 0 1px 2px 0;
    background: linear-gradient(#ddd, #8c8c8c);
}

/* ribbon */
.tabs {
    display: flex;
    flex: none;
    height: 24px;
    padding: 3px 0 0 45px;
    background: #9f9f9f;
}
.tab {
    padding: 0 12px 1px;
    color: #1a1a1a;
}
.tab.active {
    border-radius: 2px 2px 0 0;
    background: linear-gradient(#d8d8d8, #fff);
}
.tab-state {
    margin-left: 29px;
    padding-bottom: 3px;
}
.ribbon {
    display: flex;
    flex: none;
    height: 118px;
    background: linear-gradient(#e2e2e2, #a2a2a2);
}
.panel {
    display: flex;
    flex: none;
    flex-direction: column;
    border-right: 1px solid #bbb;
    background: #fff;
}
.tools {
    display: flex;
    flex: 1;
    padding: 3px 0 2px 3px;
}
.panel h2 {
    display: flex;
    align-items: center;
    justify-content: center;
    gap: 8px;
    height: 23px;
    margin: 0 1px;
    padding-bottom: 2px;
    border-top: 1px solid #ccc;
    border-bottom: 1px solid #ccc;
    background: #efefef;
    color: #333;
    font-size: 15px;
    font-weight: normal;
}
.build-panel { width: 573px; }
.build-panel .tools { padding-left: 2px; }
.stair-panel { width: 200px; }
.model-panel { width: 155px; }
.room-panel { width: 320px; }
.opening-panel { width: 251px; }
.datum-panel { width: 104px; }
.plane-panel { width: 202px; border: 0; }
.select-panel { width: 52px; }
.select-panel .tools {
    padding-left: 0;
}
.select-panel h2 {
    margin-left: -6px;
}
.tool {
    position: relative;
    display: flex;
    flex: none;
    flex-direction: column;
    align-items: center;
    width: 48px;
    padding-top: 2px;
    color: #333;
    white-space: nowrap;
}
.tool > span {
    margin-top: 5px;
}
.tool.wide { width: 60px; }
.tool.floor { width: 62px; }
.tool.mid { width: 54px; }
.tool.rail { width: 84px; }
.tool:disabled { color: #b0b0b0; }
.drop {
    margin-top: 5px;
}
.side-drop .drop {
    position: absolute;
    right: 3px;
    top: 66px;
}
.tool.modify {
    width: 48px;
    margin-left: -4px;
    border: 1px solid #1a6bc4;
    background: linear-gradient(#c7def6, #a9cdf0);
    padding-top: 1px;
}
.options-bar {
    flex: none;
    height: 30px;
    background: #e0e2e4;
}

/* docked panels: the window runs past the left screen edge */
.workspace {
    display: flex;
    flex: 1;
    min-height: 0;
    border-bottom: 1px solid #888;
}
.side {
    display: flex;
    flex: none;
    flex-direction: column;
    width: 281px;
    margin-left: -12px;
    padding: 0 4px 2px 0;
}
.dock-title {
    display: flex;
    align-items: center;
    justify-content: space-between;
    height: 27px;
    padding-right: 6px;
    background: #becbda;
    color: #1a1a1a;
}
.prop-title {
    padding-left: 3px;
}
.dock-body {
    margin: 2px 1px 0 0;
    border-top: 1px solid #777;
    border-right: 1px solid #ddd;
    border-bottom: 1px solid #fff;
}
.type-selector {
    display: flex;
    align-items: center;
    width: 100%;
    height: 91px;
    padding-right: 1px;
    border: 2px solid #d5d5d5;
    border-left: 0;
    background: linear-gradient(#fcfcfc, #ececec);
    color: #333;
}
.preview {
    display: flex;
    align-items: center;
    justify-content: center;
    width: 89px;
    height: 82px;
    padding-left: 6px;
    border: 1px solid #ccc;
}
.type-name {
    flex: 1;
    padding-left: 5px;
    text-align: left;
}
.instance-row {
    display: flex;
    height: 30px;
    padding: 1px 0;
}
.instance {
    display: flex;
    align-items: center;
    width: 180px;
    padding-right: 5px;
    border: 1px solid #aaa;
    background: #e1e1e1;
}
.instance select {
    flex: 1;
    appearance: none;
    padding-left: 8px;
}
.edit-type {
    display: flex;
    align-items: center;
    gap: 5px;
    padding: 0 0 2px 6px;
}
.prop-scroll {
    display: flex;
    height: 221px;
    overflow: hidden;
}
table {
    width: 254px;
    border-collapse: collapse;
    table-layout: fixed;
    background: #fff;
}
.name-col {
    width: 129px;
}
tr {
    height: 24px;
}
th, td {
    height: 24px;
    padding: 0 0 4px 2px;
    line-height: 19px;
    white-space: nowrap;
}
th {
    padding: 0 7px 3px 5px;
    background: #dadada;
    font-weight: normal;
    text-align: left;
}
th svg {
    float: right;
    margin-top: 4px;
}
td {
    border: 1px dotted #777;
}
td:first-child {
    padding-left: 13px;
    border-left: 0;
}
td.boxed {
    padding: 0 1px;
}
td input {
    display: block;
    width: 100%;
    height: 22px;
    padding: 0 0 2px 5px;
    border: 1px solid #000;
}
td button {
    display: block;
    width: 100%;
    height: 22px;
    border: 1px solid #aaa;
    border-width: 1px 2px 2px 1px;
    background: #e1e1e1;
    line-height: 18px;
}
.dim {
    color: #888;
}
.vscroll {
    display: flex;
    flex: none;
    flex-direction: column;
    align-items: center;
    width: 19px;
    margin-left: 2px;
    padding: 7px 0;
    background: #f0f0f0;
}
.vscroll i {
    width: 100%;
    margin: 7px 0 auto;
    background: #cdcdcd;
}
.vscroll .short { height: 50px; }
.vscroll .long { height: 238px; }
.prop-footer {
    display: flex;
    align-items: center;
    justify-content: space-between;
    height: 28px;
    padding: 2px 2px 2px 5px;
}
.prop-footer a {
    color: #0066cc;
}
.prop-footer button {
    width: 98px;
    height: 24px;
    border: 1px solid #bfbfbf;
    background: #ccc;
    color: #838383;
    line-height: 20px;
}
.browser {
    display: flex;
    flex: 1;
    flex-direction: column;
    min-height: 0;
    margin-top: 5px;
}
.browser .dock-title {
    flex: none;
}
.tree-body {
    display: flex;
    flex: 1;
    min-height: 0;
    margin: 2px 1px 0 0;
    border-top: 1px solid #777;
    border-right: 1px solid #ddd;
    background: #fff;
}
.tree-body .vscroll {
    margin: 0;
}
.tree {
    flex: 1;
    overflow: hidden;
    padding-top: 1px;
}
.tree, .tree ul {
    margin: 0;
    padding-left: 0;
    list-style: none;
    white-space: nowrap;
}
.row {
    display: flex;
    align-items: center;
    height: 22px;
}
.root {
    padding-left: 7px;
}
.root .dots {
    width: 7px;
}
.root svg {
    margin: 0 3px 0 1px;
}
.selected {
    padding: 0 3px;
    height: 22px;
    background: #e0e0e0;
}
.toggle {
    flex: none;
    width: 9px;
    height: 9px;
    border: 1px solid #919191;
    border-radius: 1px;
    background: linear-gradient(#3b57a5, #3b57a5) 1px 3px / 5px 1px no-repeat, #f6f6f6;
}
.toggle.plus {
    background: linear-gradient(#3b57a5, #3b57a5) 1px 3px / 5px 1px no-repeat, linear-gradient(#3b57a5, #3b57a5) 3px 1px / 1px 5px no-repeat, #f6f6f6;
}
.dots {
    flex: none;
    width: 10px;
    border-top: 1px dotted #999;
}
.branches {
    background: repeating-linear-gradient(#aaa 0 1px, transparent 1px 2px) 31px 0 / 1px calc(100% - 11px) no-repeat;
}
.branches .row {
    padding-left: 27px;
}
.branches .row span {
    padding-left: 3px;
}
.leaves li {
    display: flex;
    align-items: center;
    height: 22px;
    margin-left: 51px;
    background: repeating-linear-gradient(#aaa 0 1px, transparent 1px 2px) 0 0 / 1px 100% no-repeat;
}
.leaves li:last-child {
    background-size: 1px 50%;
}
.leaves li::before {
    content: "";
    width: 15px;
    margin-right: 3px;
    border-top: 1px dotted #999;
}
.legend {
    padding-left: 12px;
    gap: 1px;
}
.legend span {
    padding-left: 5px;
}

/* drawing view */
.view {
    display: flex;
    flex: 1;
    flex-direction: column;
    min-width: 0;
    border-top: 2px solid #777;
    border-left: 2px solid #777;
}
.canvas {
    position: relative;
    flex: 1;
    border-right: 1px solid #eee;
    background: #fff;
}
.curtain-wall {
    position: absolute;
    left: 482px;
    top: 111px;
}
.view-buttons {
    position: absolute;
    right: 5px;
    top: 8px;
    display: flex;
    gap: 6px;
}
.view-cube {
    position: absolute;
    right: 18px;
    top: 92px;
    width: 146px;
    height: 62px;
}
.compass {
    position: absolute;
    left: 0;
    bottom: 0;
}
.cube-face {
    position: absolute;
    left: 47px;
    top: 0;
    display: flex;
    align-items: center;
    justify-content: center;
    width: 52px;
    height: 52px;
    padding-bottom: 2px;
    border: 1px solid #aaa;
    background: linear-gradient(#f0f0f0, #d8d8d8);
    color: #8f929a;
    font-size: 30px;
    line-height: 30px;
}
.cube-face span {
    background: #dcdee2;
}
.nav-bar {
    position: absolute;
    right: 1px;
    top: 199px;
    display: flex;
    flex-direction: column;
    align-items: center;
    width: 36px;
    height: 118px;
    padding: 1px 2px 2px;
    justify-content: space-between;
    border: 2px solid #bbb;
    border-radius: 6px;
    background: #f4f4f4;
}
.nav-bar hr {
    width: 26px;
    margin: 0;
    border: 0;
    border-top: 1px solid #bbb;
}
.nav-small {
    align-self: flex-end;
}
.faint {
    opacity: .5;
}
.view-control {
    display: flex;
    flex: none;
    align-items: center;
    height: 23px;
    border-bottom: 1px solid #fff;
    background: #efefef;
}
.scale {
    width: 103px;
    padding-left: 8px;
    font-family: "Liberation Mono", monospace;
    font-size: 13px;
}
.view-tools {
    display: flex;
}
.view-tools button {
    display: flex;
    width: 28px;
    justify-content: center;
}
.hscroll {
    display: flex;
    flex: 1;
    align-items: center;
    justify-content: space-between;
    padding: 0 9px 0 4px;
}
.hscroll i {
    width: 21px;
    height: 19px;
    background: #cdcdcd;
}
```
